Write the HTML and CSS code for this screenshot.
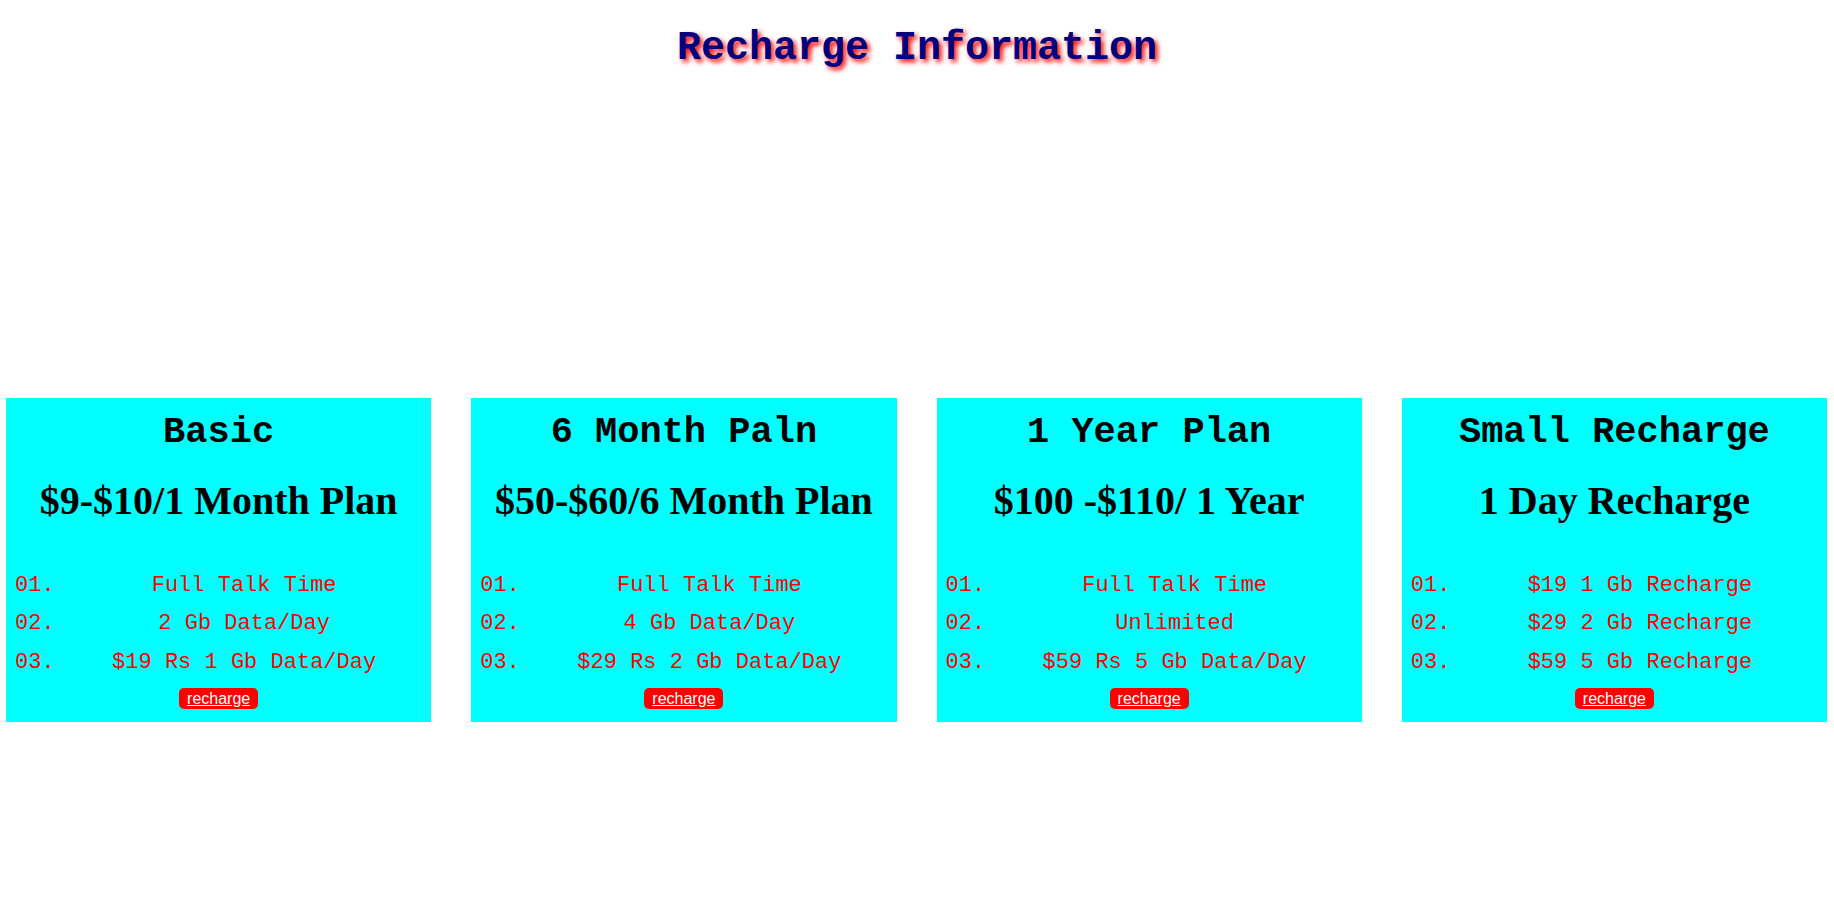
FILE: index.html
```html
<!DOCTYPE html>
<html lang="en">
<head>
<meta charset="utf-8">
<title>Recharge Information</title>
<link rel="stylesheet" href="styles.css">
</head>
<body>
<h1 class="page-title">Recharge Information</h1>
<div class="plans">
  <div class="plan">
    <h2 class="plan-name">Basic</h2>
    <h3 class="plan-price">$9-$10/1 Month Plan</h3>
    <ul class="features">
      <li class="feature"><span class="num">01.</span><span class="txt">Full Talk Time</span></li>
      <li class="feature"><span class="num">02.</span><span class="txt">2 Gb Data/Day</span></li>
      <li class="feature"><span class="num">03.</span><span class="txt">$19 Rs 1 Gb Data/Day</span></li>
    </ul>
    <a class="btn" href="#">recharge</a>
  </div>
  <div class="plan">
    <h2 class="plan-name">6 Month Paln</h2>
    <h3 class="plan-price">$50-$60/6 Month Plan</h3>
    <ul class="features">
      <li class="feature"><span class="num">01.</span><span class="txt">Full Talk Time</span></li>
      <li class="feature"><span class="num">02.</span><span class="txt">4 Gb Data/Day</span></li>
      <li class="feature"><span class="num">03.</span><span class="txt">$29 Rs 2 Gb Data/Day</span></li>
    </ul>
    <a class="btn" href="#">recharge</a>
  </div>
  <div class="plan">
    <h2 class="plan-name">1 Year Plan</h2>
    <h3 class="plan-price">$100 -$110/ 1 Year</h3>
    <ul class="features">
      <li class="feature"><span class="num">01.</span><span class="txt">Full Talk Time</span></li>
      <li class="feature"><span class="num">02.</span><span class="txt">Unlimited</span></li>
      <li class="feature"><span class="num">03.</span><span class="txt">$59 Rs 5 Gb Data/Day</span></li>
    </ul>
    <a class="btn" href="#">recharge</a>
  </div>
  <div class="plan">
    <h2 class="plan-name">Small Recharge</h2>
    <h3 class="plan-price">1 Day Recharge</h3>
    <ul class="features">
      <li class="feature"><span class="num">01.</span><span class="txt">$19 1 Gb Recharge</span></li>
      <li class="feature"><span class="num">02.</span><span class="txt">$29 2 Gb Recharge</span></li>
      <li class="feature"><span class="num">03.</span><span class="txt">$59 5 Gb Recharge</span></li>
    </ul>
    <a class="btn" href="#">recharge</a>
  </div>
</div>
</body>
</html>
```

FILE: styles.css
```css
html, body {
  margin: 0;
  padding: 0;
  background: #ffffff;
}

body {
  font-family: "Liberation Mono", "Courier New", monospace;
}

.page-title {
  margin: 25px 0 0;
  font-family: "Liberation Mono", "Courier New", monospace;
  font-weight: bold;
  font-size: 40px;
  line-height: 48px;
  text-align: center;
  color: #000080;
  text-shadow: 3px 3px 5px #ff0000;
}

.plans {
  display: flex;
  gap: 40px;
  padding: 0 7px 0 6px;
  margin-top: 325px;
}

.plan {
  flex: 1 1 0;
  background: #00ffff;
  display: flex;
  flex-direction: column;
  align-items: center;
  padding: 12px 0 13.5px;
}

.plan-name {
  margin: 0;
  font-family: "Liberation Mono", "Courier New", monospace;
  font-weight: bold;
  font-size: 37px;
  line-height: 44px;
  color: #000000;
  text-align: center;
}

.plan-price {
  margin: 22.5px 0 0;
  font-family: "Liberation Serif", "Times New Roman", serif;
  font-weight: bold;
  font-size: 40px;
  line-height: 48px;
  color: #000000;
  text-align: center;
}

.features {
  list-style: none;
  margin: 42px 0 0;
  padding: 0;
  align-self: stretch;
}

.feature {
  display: flex;
  padding-left: 9px;
  font-family: "Liberation Mono", "Courier New", monospace;
  font-size: 22px;
  line-height: 38.5px;
  color: #ff0000;
}

.num {
  width: 42px;
  flex: none;
}

.txt {
  flex: 1;
  text-align: center;
  white-space: pre;
}

.btn {
  margin-top: 5.5px;
  display: inline-block;
  background: #ff0000;
  color: #ffffff;
  font-family: "Liberation Sans", Arial, sans-serif;
  font-size: 16px;
  line-height: 19px;
  padding: 1px 8px;
  border-radius: 5px;
  text-decoration: underline;
}
```
